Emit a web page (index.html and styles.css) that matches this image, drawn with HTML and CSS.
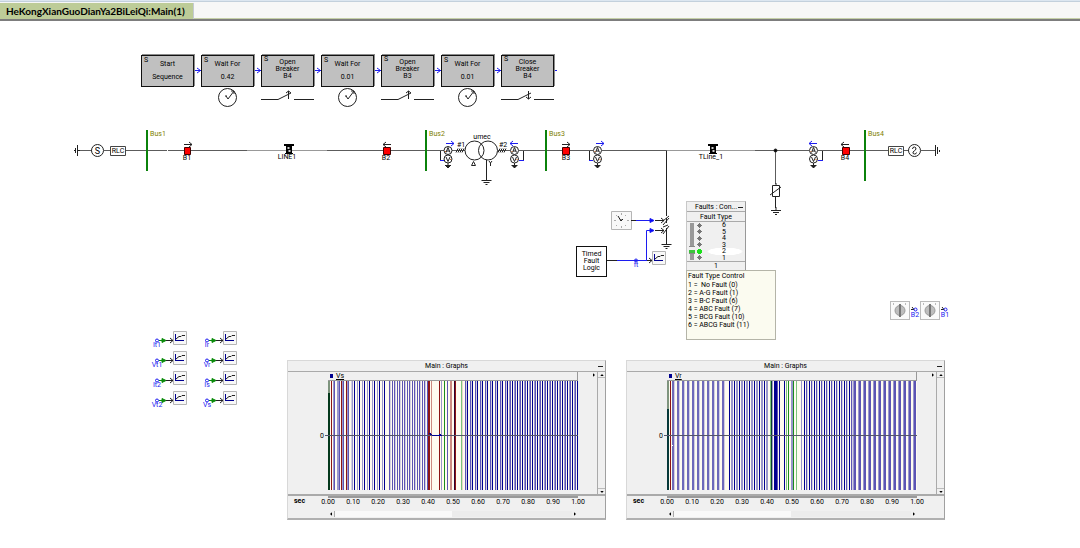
FILE: index.html
```html
<!DOCTYPE html>
<html lang="en">
<head>
<meta charset="utf-8">
<title>HeKongXianGuoDianYa2BiLeiQi:Main(1)</title>
<link rel="stylesheet" href="styles.css">
</head>
<body>
<header class="tabs"><button class="tab" type="button">HeKongXianGuoDianYa2BiLeiQi:Main(1)</button></header>
<main class="canvas">
<svg class="circuit" width="960" height="400" viewBox="0 21 960 400" role="img" aria-label="Circuit diagram">
  <defs>
    <g id="gnd"><path d="M0 0V3M-5 3.500H5M-3 5.500H3M-1 7.500H1"/></g>
    <g id="meter">
      <circle cx="0" cy="0" r="4"/><circle cx="0" cy="8.500" r="4"/>
      <path d="M-2 2L0-3L2 2M-1.500.5H1.500M-2 6.500L0 11L2 6.500M0 12.500V15M-3 15H3M-2 16H2M-1 17H1"/>
      <path class="orange" d="M-3 1H-2M2 9H3"/>
    </g>
    <g id="arrow"><path d="M-4 .5H4M1-2L4 .5L1 3"/></g>
    <g id="hash"><path d="M-4 2L-2-2M-2 2L0-2M0 2L2-2M2 2L4-2"/></g>
    <g id="tower" class="solid"><path d="M-5-6H5V-4H3V3H4V4H-4V3H-3V-4H-5Z"/><path class="light" d="M-1.500-3H.5V-1H-1.500ZM-.5 0H1.500V2H-.5Z"/></g>
    <g id="plotter"><path class="box" d="M.5.5H13.500V13.500H.5Z"/><path class="navy" d="M2.500 3V10M2 9.500H11"/><path d="M3 8L6 5.500H8L9 4.500H12"/></g>
    <g id="channel"><circle class="blue" cx="0" cy=".5" r="1.500"/><path class="green" d="M2 .5H5"/><path class="greenfill" d="M5-1.500L9 .5L5 2.500Z"/><path d="M9 .5H16M13-2L16 .5L13 3"/><use href="#plotter" x="16" y="-9"/></g>
    <g id="seqarrow" class="blue"><path d="M0 .5H7M3-2L6.500 .5L3 3"/></g>
  </defs>

  <g class="wire">
    <use href="#seqarrow" x="194" y="70"/><use href="#seqarrow" x="254" y="70"/><use href="#seqarrow" x="314" y="70"/><use href="#seqarrow" x="374" y="70"/><use href="#seqarrow" x="434" y="70"/><use href="#seqarrow" x="494" y="70"/>
    <path class="blue" d="M554 70.500H557"/>
  </g>

  <g class="wire gray">
    <path d="M78 150.500H92M104 150.500H110M125 150.500H167M168 150.500H247M327 150.500H444M452 150.500H465M498 150.500H510M519 150.500H593M602 150.500H667M755 150.500H809M818 150.500H888M903 150.500H909M921 150.500H935"/>
    <path class="pale" d="M247 150.500H327M667 150.500H755"/>
    <path d="M775.500 151V184"/>
  </g>
  <g class="bus"><path d="M147 130V171M426 130V171M546 130V171M865 130V181"/></g>

  <g class="wire">
    <path d="M77.500 145V156M75.500 148V153M74 150.500H76M78 150.500H80"/>
    <circle cx="97.500" cy="150.500" r="6"/>
    <path class="box2" d="M110.500 146.500H125.500V155.500H110.500ZM888.500 146.500H903.500V155.500H888.500Z"/>
    <circle cx="914.500" cy="150.500" r="6"/>
    <path d="M912.500 149Q912.500 147 914.500 147Q917 147.500 915.500 150Q914 151 913 152Q912.500 154 914.500 154Q916.500 154 916.500 152.500M935.500 145V156M937.500 147V154M939.500 150V152"/>
    <use href="#tower" x="289" y="150"/><use href="#tower" x="713" y="150"/>
    <use href="#arrow" x="188" y="144"/><use href="#arrow" x="566" y="144"/>
    <use href="#arrow" transform="translate(387 145) rotate(180)"/><use href="#arrow" transform="translate(845 145) rotate(180)"/>
    <path class="red" d="M184.500 147.500H190.500V154.500H184.500ZM383.500 147.500H390.500V154.500H383.500ZM562.500 147.500H569.500V154.500H562.500ZM842.500 147.500H849.500V154.500H842.500Z"/>
    <use href="#meter" x="448" y="150.500"/><use href="#meter" x="514.500" y="150.500"/><use href="#meter" x="597.500" y="150.500"/><use href="#meter" x="813.500" y="150.500"/>
    <path d="M440.500 151V160M523.500 151V160M589.500 151V160M822.500 151V160"/>
    <g class="blue"><path d="M440 160.500H444M519 160.500H524M589 160.500H593M818 160.500H823"/>
      <use href="#arrow" x="450" y="143"/><use href="#arrow" x="600" y="143"/>
      <use href="#arrow" transform="translate(514 144) rotate(180)"/><use href="#arrow" transform="translate(813 144) rotate(180)"/></g>
    <use href="#hash" x="460" y="150.500"/><use href="#hash" x="502" y="150.500"/>
    <circle cx="474.500" cy="150.500" r="9.500"/><circle cx="488" cy="150.500" r="9.500"/>
    <path d="M471.500 165.500L473.500 161.500L475.500 165.500ZM489 161L490.500 163L492 161M490.500 163V166M486.500 160V178"/>
    <use href="#gnd" x="486.500" y="177"/>
    <circle class="dot" cx="775.500" cy="150.500" r="1.500"/>
    <path d="M772.500 185.500H779.500V196.500H772.500ZM770 195L781 187M776 183V185M775.500 197V208"/>
    <use href="#gnd" x="776" y="207"/>
    <path d="M666.500 151V216M663 221L669 216M663 225L669 218M666.500 218V223M663 227L668 225M663 234L669 226M666.500 228V243"/>
    <use href="#gnd" x="666.500" y="241"/>
    <path class="box" d="M611.500 211.500H631.500V229.500H611.500Z"/>
    <path class="tick" d="M621.500 213V215M621.500 226V228M614 220.500H616M627 220.500H629M616 215L617 216M626 215L625 216M616 226L617 225M626 226L625 225"/>
    <path d="M618 216L621 221L623 219M620 220H622"/>
    <path d="M631 220.500H636M655 220.500H664M661 218L664 220.500L661 223M655 230.500H664M661 228L664 230.500L661 233M607 260.500H617M647 260.500H652M649 258L652 260.500L649 263"/>
    <g class="blue"><path d="M636 220.500H650M617 260.500H647M646.500 260V230.500H650"/><circle cx="636" cy="260.500" r="1.500"/><path class="bluefill" d="M650 218.500L654 220.500L650 222.500ZM650 228.500L654 230.500L650 232.500Z"/></g>
    <use href="#plotter" x="652" y="251"/>
    <use href="#channel" x="157" y="340"/><use href="#channel" x="157" y="360"/><use href="#channel" x="157" y="380"/><use href="#channel" x="157" y="400"/>
    <use href="#channel" x="207" y="340"/><use href="#channel" x="207" y="360"/><use href="#channel" x="207" y="380"/><use href="#channel" x="207" y="400"/>
    <path d="M911 309.500H914M912 307L914 309.500M941 309.500H944M942 307L944 309.500"/><g class="blue"><circle cx="915.500" cy="309.500" r="1.500"/><circle cx="945.500" cy="309.500" r="1.500"/></g>
  </g>

  <g class="names">
    <text x="97.500" y="154" class="sign">S</text><text x="118" y="153">RLC</text><text x="896" y="153">RLC</text>
    <text x="187" y="160">B1</text><text x="386" y="160">B2</text><text x="566" y="160">B3</text><text x="845" y="160">B4</text>
    <text x="287" y="159">LINE1</text><text x="711" y="159">TLine_1</text><text x="482" y="139">umec</text><text x="461" y="147">#1</text><text x="503" y="147">#2</text>
    <g class="olive"><text x="158" y="136">Bus1</text><text x="437" y="136">Bus2</text><text x="557" y="136">Bus3</text><text x="876" y="136">Bus4</text></g>
    <g class="signal"><text x="636" y="267">ft</text>
      <text x="157" y="347">It1</text><text x="157" y="367">Vt1</text><text x="157" y="387">It2</text><text x="157" y="407">Vt2</text>
      <text x="207" y="347">Ir</text><text x="207" y="367">Vr</text><text x="207" y="387">Is</text><text x="207" y="407">Vs</text>
      <text x="915" y="317">B2</text><text x="945" y="317">B1</text></g>
  </g>
</svg>

<section class="sequence" aria-label="Sequence">
  <div class="step"><div class="block"><i>S</i><span>Start</span><span>Sequence</span></div></div>
  <div class="step"><div class="block"><i>S</i><span>Wait For</span><span>0.42</span></div><svg class="symbol" width="54" height="22" viewBox="0 0 54 22"><circle cx="26.500" cy="10.500" r="9"/><path d="M25 9L27 12L33 4M30 4H33V7M25 8V10"/></svg></div>
  <div class="step"><div class="block tight"><i>S</i><span>Open</span><span>Breaker</span><span>B4</span></div><svg class="symbol" width="54" height="22" viewBox="0 0 54 22"><path d="M0 12.500H17L30 6M33 12.500H53M27.500 4V12M25 6L27.500 4L30 6"/></svg></div>
  <div class="step"><div class="block"><i>S</i><span>Wait For</span><span>0.01</span></div><svg class="symbol" width="54" height="22" viewBox="0 0 54 22"><circle cx="26.500" cy="10.500" r="9"/><path d="M25 9L27 12L33 4M30 4H33V7M25 8V10"/></svg></div>
  <div class="step"><div class="block tight"><i>S</i><span>Open</span><span>Breaker</span><span>B3</span></div><svg class="symbol" width="54" height="22" viewBox="0 0 54 22"><path d="M0 12.500H17L30 6M33 12.500H53M27.500 4V12M25 6L27.500 4L30 6"/></svg></div>
  <div class="step"><div class="block"><i>S</i><span>Wait For</span><span>0.01</span></div><svg class="symbol" width="54" height="22" viewBox="0 0 54 22"><circle cx="26.500" cy="10.500" r="9"/><path d="M25 9L27 12L33 4M30 4H33V7M25 8V10"/></svg></div>
  <div class="step"><div class="block tight"><i>S</i><span>Close</span><span>Breaker</span><span>B4</span></div><svg class="symbol" width="54" height="22" viewBox="0 0 54 22"><path d="M0 12.500H17L30 6M33 12.500H53M27.500 4V12M25 10L27.500 12L30 10"/></svg></div>
</section>

<div class="logic"><span>Timed</span><span>Fault</span><span>Logic</span></div>

<section class="faults" aria-label="Faults control">
  <header class="bar"><span>Faults : Con...</span><button type="button" class="min" aria-label="Minimize"></button></header>
  <label class="caption" for="fault">Fault Type</label>
  <div class="selector">
    <input id="fault" type="range" min="1" max="6" value="2">
    <ol class="levels"><li>6</li><li>5</li><li>4</li><li>3</li><li class="on">2</li><li>1</li></ol>
  </div>
  <output class="value" for="fault">1</output>
</section>
<aside class="note"><p>Fault Type Control</p><p>1 =&nbsp; No Fault (0)</p><p>2 = A-G Fault (1)</p><p>3 = B-C Fault (6)</p><p>4 = ABC Fault (7)</p><p>5 = BCG Fault (10)</p><p>6 = ABCG Fault (11)</p></aside>

<div class="dials">
  <button type="button" class="dial" aria-label="B2"><svg width="18" height="17" viewBox="0 0 18 17"><path class="tick" d="M2.500 1V3M14.500 1V3"/><circle cx="9" cy="8.500" r="5"/><path d="M9 2V15"/></svg></button>
  <button type="button" class="dial" aria-label="B1"><svg width="18" height="17" viewBox="0 0 18 17"><path class="tick" d="M2.500 1V3M14.500 1V3"/><circle cx="9" cy="8.500" r="5"/><path d="M9 2V15"/></svg></button>
</div>

<section class="graph graph-vs" data-trace="vs" data-label="Vs"></section>
<section class="graph graph-vr" data-trace="vr" data-label="Vr"></section>
<template id="graph">
  <header class="bar"><span>Main : Graphs</span><button type="button" class="min" aria-label="Minimize"></button></header>
  <div class="body">
    <div class="zero">0</div>
    <div class="frame">
      <div class="legend"><b></b><span class="label"></span></div>
      <svg class="plot" viewBox="0 0 250 109" preserveAspectRatio="none"></svg>
    </div>
    <div class="side"><svg width="2" height="4" viewBox="0 0 3 5"><path d="M0 0L3 2.500L0 5Z"/></svg></div>
    <div class="vscroll"><button type="button" aria-label="Up"><svg width="4" height="2" viewBox="0 0 5 3"><path d="M0 3L2.500 0L5 3Z"/></svg></button><button type="button" aria-label="Down"><svg width="4" height="2" viewBox="0 0 5 3"><path d="M0 0H5L2.500 3Z"/></svg></button></div>
  </div>
  <div class="axis">
    <span class="unit">sec</span>
    <div class="scale"><div class="ticks"></div><div class="hscroll"><button type="button" aria-label="Left"><svg width="2" height="4" viewBox="0 0 3 5"><path d="M3 0L0 2.500L3 5Z"/></svg></button><div class="thumb"></div><button type="button" aria-label="Right"><svg width="2" height="4" viewBox="0 0 3 5"><path d="M0 0L3 2.500L0 5Z"/></svg></button></div></div>
  </div>
</template>
</main>
<script src="graphs.js"></script>
</body>
</html>
```

FILE: styles.css
```css
* { box-sizing: border-box; }
body {
  margin: 0;
  min-height: 100vh;
  display: flex;
  flex-direction: column;
  background: #fff;
  color: #000;
  font: 7px/8px Roboto, "Liberation Sans", sans-serif;
}
p, ol { margin: 0; padding: 0; list-style: none; }
button { margin: 0; padding: 0; border: 0; background: none; font: inherit; color: inherit; }

.tabs {
  display: flex;
  padding-top: 2px;
  background: #f7f7f7;
  border-top: 1px solid #dce6f0;
  border-bottom: 2px solid #7d7d7d;
  box-shadow: inset 0 1px #c3d0dc, inset 0 -1px #c6d0a8;
}
.tab {
  height: 16px;
  padding: 0 8px 0 6px;
  min-width: 189px;
  text-align: left;
  background: #bdcc98;
  border-right: 1px solid #c4cad4;
  font: bold 10px/14px Lato, "Noto Sans", sans-serif;
  white-space: nowrap;
}
.canvas { position: relative; flex: 1; min-height: 527px; }
.circuit { position: absolute; left: 0; top: 0; }

.wire, .wire .blue { fill: none; stroke: #222; stroke-width: 1; }
.wire.gray { stroke: #5c5c5c; }
.pale { stroke: #999; }
.bus { stroke: #0b820b; stroke-width: 2; }
.wire .blue, .blue { stroke: #1c1cf0; }
.bluefill { fill: #00f; }
.green { stroke: #0a8a0a; }
.greenfill { fill: #0a8a0a; stroke: #0a8a0a; }
.navy { stroke: #000090; }
.box { fill: #f8f8f8; stroke: #b5b5b5; }
.box2 { stroke: #444; }
.tick { stroke: #aaa; }
.red { fill: #f00; stroke: #400; }
.orange { stroke: #d86b20; }
.solid { fill: #000; stroke: none; }
.light { fill: #ccc; }
.dot { fill: #000; }
.names { text-anchor: middle; fill: #000; }
.names .sign { font-size: 9px; }
.olive { fill: #808000; }
.signal { fill: #2222f0; }

.sequence { position: absolute; left: 141px; top: 34px; display: flex; gap: 7px; }
.step { width: 53px; }
.block {
  position: relative;
  height: 32px;
  padding-top: 4px;
  display: flex;
  flex-direction: column;
  align-items: center;
  gap: 4px;
  border: 1px solid #111;
  background: #c0c0c0;
  box-shadow: 1px -1px #8c8c8c;
  line-height: 9px;
}
.block i { position: absolute; left: 2px; top: 0; font-style: normal; }
.tight { gap: 0; padding-top: 3px; line-height: 7px; }
.symbol { display: block; fill: none; stroke: #222; }

.logic {
  position: absolute; left: 576px; top: 225px;
  width: 31px; height: 31px;
  display: flex; flex-direction: column; align-items: center; justify-content: center;
  border: 1px solid #111;
  background: #fff;
  line-height: 7px;
}

.bar {
  height: 10px;
  display: flex;
  align-items: center;
  justify-content: center;
  position: relative;
  border-bottom: 1px solid #aaa;
}
.min { position: absolute; right: 2px; top: 5px; width: 5px; height: 1px; background: #222; }

.faults {
  position: absolute; left: 686px; top: 180px;
  width: 60px;
  background: #f0f0f0;
  border: 1px solid #c8c8c8;
  border-right-color: #999;
  border-bottom-color: #999;
}
.caption { display: block; height: 10px; line-height: 10px; text-align: center; border-bottom: 1px solid #aaa; }
.selector { display: flex; height: 39px; }
.selector input {
  appearance: none;
  writing-mode: vertical-lr;
  direction: rtl;
  width: 6px;
  height: 37px;
  margin: 1px 2px;
  background: linear-gradient(90deg, #f0f0f0 1px, #999 1px 5px, #f0f0f0 5px);
}
.selector input::-webkit-slider-thumb {
  appearance: none;
  width: 6px;
  height: 8px;
  border: 1px solid #888;
  border-width: 1px 0;
  background: linear-gradient(#f0f0f0 3px, #3cc43c 3px);
}
.levels { flex: 1; display: flex; flex-direction: column; }
.levels li { flex: 1; display: flex; align-items: center; line-height: 6px; }
.levels li::before {
  content: "";
  width: 5px; height: 5px;
  margin-right: 20px;
  background: linear-gradient(#777, #777) center / 5px 1px no-repeat, linear-gradient(#777, #777) center / 3px 3px no-repeat, linear-gradient(#777, #777) center / 1px 5px no-repeat;
}
.levels .on { background: radial-gradient(18px 4px at 28px 50%, #fff 90%, #f0f0f0); }
.levels .on::before { background: linear-gradient(#1be01b, #1be01b) center / 5px 3px no-repeat, linear-gradient(#1be01b, #1be01b) center / 3px 5px no-repeat; }
.value { display: block; height: 9px; line-height: 9px; text-align: center; border-top: 1px solid #aaa; }

.note {
  position: absolute; left: 686px; top: 249px;
  width: 90px; height: 70px;
  padding: 1px;
  border: 1px solid #b4b4a8;
  background: #fbfbf0;
}
.note p { line-height: 8px; white-space: nowrap; }
.note p:first-child { line-height: 9px; }

.dials { position: absolute; left: 890px; top: 280px; display: flex; gap: 10px; }
.dial { width: 20px; height: 19px; border: 1px solid #bbb; background: #fafafa; }
.dial svg { display: block; fill: #bdbdbd; stroke: #999; }
.dial path { stroke: #777; stroke-width: 2; }
.dial .tick { stroke: #bbb; stroke-width: 1; }

.graph {
  position: absolute; top: 339px;
  width: 319px;
  background: #f0f0f0;
  border: 1px solid #d8d8d8;
  border-right: 1px solid #a0a0a0;
  border-bottom: 2px solid #b0b0b0;
}
.graph .bar { height: 11px; }
.graph-vs { left: 287px; }
.graph-vr { left: 626px; }
.body { display: grid; grid-template-columns: 40px 1fr 19px 8px; height: 124px; border-bottom: 2px solid #aaa; }
.zero { padding: 60px 4px 0 0; text-align: right; }
.frame { display: flex; flex-direction: column; }
.legend { height: 9px; display: flex; align-items: center; gap: 3px; padding-left: 2px; border-bottom: 1px solid #999; border-right: 1px solid #999; }
.legend b { width: 3px; height: 4px; background: #000090; }
.label { text-decoration: underline; line-height: 7px; }
.plot { display: block; width: 100%; height: 109px; background: #fffbf0; overflow: visible; shape-rendering: crispEdges; }
.side { padding: 1px 2px 0 0; text-align: right; }
.side svg, .vscroll svg, .hscroll svg { display: block; margin: auto; }
.side svg { margin-right: 0; }
.vscroll { display: flex; flex-direction: column; justify-content: space-between; border-left: 1px solid #aaa; }
.vscroll button { height: 6px; border-bottom: 1px solid #bbb; }
.vscroll button:last-child { border-bottom: 0; border-top: 1px solid #bbb; }
.axis { display: grid; grid-template-columns: 40px 1fr 27px; height: 22px; }
.unit { padding: 1px 0 0 6px; font-weight: bold; }
.ticks {
  display: flex;
  justify-content: space-between;
  height: 15px;
  border-top: 2px solid #999;
}
.ticks span { width: 0; display: flex; justify-content: center; }
.hscroll { display: flex; height: 6px; }
.hscroll button { width: 6px; }
.thumb { flex: 1; border-left: 1px solid #aaa; background: linear-gradient(90deg, #f9f9f9 117px, #ececec 117px); }
```

FILE: graphs.js
```js
const NAVY = '#000090', MID = '#5c54b4', SOFT = '#9a96cc', PALE = '#d2cfe2';
const RED = '#8c1414', PINK = '#cc8a80', GREEN = '#1c8c1c', LIME = '#7cc47c';

// Repeats a group of [offset, width, colour] stripes from one x to another.
function repeat(from, to, step, group) {
  const out = [];
  for (let x = from; x < to; x += step)
    for (const [dx, w, c] of group) if (x + dx < 250) out.push([x + dx, w, c]);
  return out;
}

const traces = {
  vs: {
    top: 12, start: '#05381c',
    bars: [
      [3, 1, RED], [5, 2, SOFT], [6, 1, MID], [9, 2, SOFT], [11, 1, MID], [13, 1, RED], [14, 1, SOFT], [15, 1, MID], [18, 1, RED], [19, 1, SOFT], [20, 1, MID], [23, 1, PALE],
      ...repeat(26, 60, 5, [[-2, 1, SOFT], [0, 1, NAVY]]),
      ...repeat(61, 98, 5, [[0, 1, MID], [1, 1, PALE], [3, 1, MID]]),
      [99, 1, MID], [100, 2, RED], [103, 1, PINK], [111, 1, RED], [113, 1, SOFT], [116, 1, GREEN], [119, 1, MID],
      [122, 2, PINK], [126, 1, '#300030'], [127, 1, RED], [133, 1, LIME], [134, 1, '#e8d8c8'],
      ...repeat(139, 180, 5, [[-2, 1, MID], [-1, 1, PALE], [0, 1, NAVY]]),
      ...repeat(184, 250, 5, [[-3, 1, SOFT], [-2, 1, MID], [0, 1, NAVY]])
    ],
    mark: 'M101 52L104 54H111L114 54M111 53L113 53'
  },
  vr: {
    top: 28, start: '#06383a',
    bars: [
      [3, 1, RED],
      ...repeat(5, 60, 5, [[0, 2, '#6f69ba'], [2, 1, PALE]]),
      ...repeat(62, 100, 5, [[0, 1, NAVY], [2, 2, SOFT]]),
      [103, 1, LIME], [104, 1, '#063c30'], [105, 1, SOFT], [107, 3, NAVY], [110, 1, MID], [112, 1, NAVY], [117, 1, NAVY],
      [119, 1, LIME], [121, 1, GREEN], [124, 2, SOFT], [126, 1, GREEN], [129, 1, LIME], [134, 1, SOFT],
      ...repeat(137, 184, 5, [[0, 1, NAVY], [2, 1, MID], [3, 1, PALE]]),
      ...repeat(186, 250, 5, [[0, 1, SOFT], [1, 2, MID]])
    ],
    mark: 'M5 64H6'
  }
};

for (const el of document.querySelectorAll('.graph')) {
  el.append(document.getElementById('graph').content.cloneNode(true));
  const t = traces[el.dataset.trace];
  el.querySelector('.label').textContent = el.dataset.label;
  const bar = (x, y, w, h, c) => `<rect x="${x}" y="${y}" width="${w}" height="${h}" fill="${c}"/>`;
  el.querySelector('.plot').innerHTML =
    t.bars.map(([x, w, c]) => bar(x, 0, w, 109, c)).join('') +
    bar(0, 0, 2, t.top, '#7e947e') + bar(0, t.top, 2, 109 - t.top, t.start) +
    bar(-3, 54, 253, 1, '#55556a') +
    `<path d="${t.mark}" fill="none" stroke="${el.dataset.trace === 'vs' ? '#000090' : '#ffffff'}"/>`;
  const ticks = el.querySelector('.ticks');
  for (let i = 0; i <= 10; i++) {
    const s = document.createElement('span');
    s.textContent = (i / 10).toFixed(2);
    ticks.append(s);
  }
}
```
